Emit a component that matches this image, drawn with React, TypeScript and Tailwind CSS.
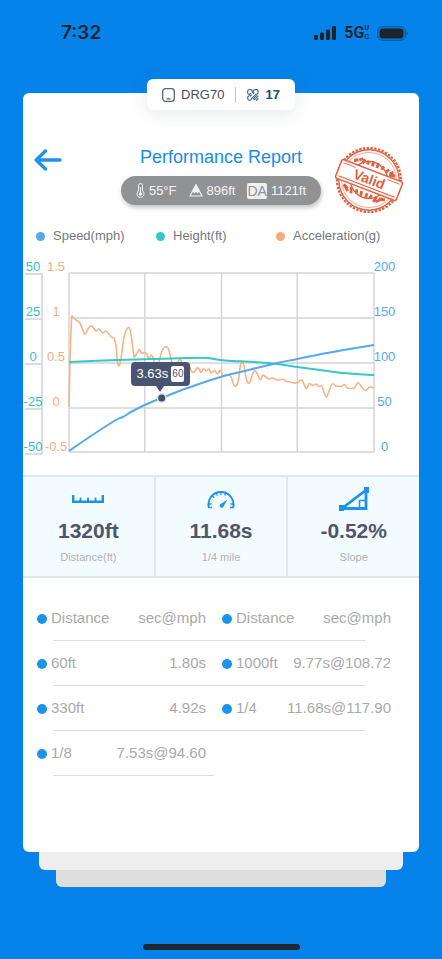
import React from "react";

type Point = [number, number];

const speed: Point[] = [
  [0, 178], [19, 165], [47, 147], [54, 144], [64, 138], [76, 132], [93, 125],
  [119, 115], [152, 104], [172, 99], [209, 90], [229, 86], [259, 80], [306, 72],
];

const height: Point[] = [
  [0, 89], [49, 87], [85, 86], [119, 85], [139, 85], [152, 87], [165, 88],
  [185, 89], [209, 91], [229, 94], [252, 97], [275, 100], [306, 102],
];

const acceleration: Point[] = [
  [0, 134], [1, 90], [2.5, 47], [4, 44.5], [7, 47], [11, 50], [15, 60], [17, 60],
  [20, 54.5], [23, 53], [27, 58], [30, 56], [34, 60], [37, 58], [40, 61],
  [42, 64], [45, 65], [47, 72], [49, 91], [51, 91], [53, 80], [55, 65],
  [57, 58], [60, 54.5], [62, 60], [65, 82], [66.5, 83], [69, 79], [70.5, 76.5],
  [73, 80], [75.5, 79.5], [78, 81], [80, 86], [82.5, 82], [84.5, 85], [86, 90],
  [90, 89], [92.5, 80], [95, 75], [98.5, 74], [101, 80], [103, 89], [105, 92],
  [109, 89], [111.5, 86.5], [113.5, 90], [117, 94], [120, 92], [123.5, 99],
  [126, 98.5], [128.5, 95], [130.5, 96], [132.5, 99.5], [135, 95.5],
  [137.5, 98], [140.5, 96], [142.5, 100], [146, 97.5], [149, 101], [152, 97],
  [154, 102], [157, 102.5], [161, 102], [163, 105], [165.5, 112.5],
  [168.5, 112], [170.5, 104], [172, 92], [173.5, 89.5], [175.5, 92],
  [177.5, 104], [179.5, 110], [182, 108], [184.5, 100], [187, 98],
  [189.5, 102], [192, 107], [194.5, 102], [197.5, 104], [200.5, 106],
  [204, 105], [210, 107], [214.5, 106], [217.5, 108], [223.5, 109.5],
  [229, 110], [233.5, 107], [238, 115.5], [241, 110.5], [244.5, 112.5],
  [248, 111], [250.5, 113.5], [253.5, 113], [256, 120], [258.5, 124],
  [260.5, 119], [264, 111], [268, 113], [274, 113], [276.5, 111.5],
  [279.5, 115], [286, 115], [290, 109.5], [293.5, 114], [297.5, 117.5],
  [301.5, 114], [306, 115],
];

// smooth line through all points
const toPath = (pts: Point[]) => {
  let d = `M${pts[0][0]} ${pts[0][1]}`;
  for (let i = 0; i < pts.length - 1; i++) {
    const a = pts[i - 1] || pts[i];
    const b = pts[i];
    const c = pts[i + 1];
    const e = pts[i + 2] || c;
    d += ` C${b[0] + (c[0] - a[0]) / 6} ${b[1] + (c[1] - a[1]) / 6} ${
      c[0] - (e[0] - b[0]) / 6
    } ${c[1] - (e[1] - b[1]) / 6} ${c[0]} ${c[1]}`;
  }
  return d;
};

const legend = [
  { label: "Speed(mph)", dot: "bg-[#56a9ee]" },
  { label: "Height(ft)", dot: "bg-[#35c8c9]" },
  { label: "Acceleration(g)", dot: "bg-[#f6ab7c]" },
];

const rows = [
  ["60ft", "1.80s", "1000ft", "9.77s@108.72"],
  ["330ft", "4.92s", "1/4", "11.68s@117.90"],
  ["1/8", "7.53s@94.60", "", ""],
];

const StatusBar = () => (
  <div className="flex h-[66px] items-center justify-between pl-[61px] pr-[34px] text-[#1c232b]">
    <span className="font-['Inter'] text-[19px] font-semibold">7:32</span>
    <div className="flex items-center gap-2">
      <svg width="22" height="14" viewBox="0 0 22 14" fill="currentColor">
        <rect x="0" y="9" width="4" height="5" rx="1.2" />
        <rect x="6" y="6.5" width="4" height="7.5" rx="1.2" />
        <rect x="12" y="3.5" width="4" height="10.5" rx="1.2" />
        <rect x="18" y="0" width="4" height="14" rx="1.2" />
      </svg>
      <div className="flex items-center font-['Roboto'] font-semibold">
        <span className="text-[16px] leading-4">5G</span>
        <span className="flex flex-col text-[7px] leading-[9px]">
          <span className="h-[9px]">U</span>
          <span className="h-[9px]">C</span>
        </span>
      </div>
      <svg width="31" height="15" viewBox="0 0 31 15" fill="none">
        <rect x="0.8" y="0.8" width="27.4" height="13.4" rx="4.5" stroke="#1c232b" strokeOpacity="0.55" />
        <rect x="2.5" y="2.5" width="24" height="10" rx="3" fill="#1c232b" />
        <path d="M29.5 5.3c1.500.7 1.500 3.700 0 4.400z" fill="#1c232b" fillOpacity="0.6" />
      </svg>
    </div>
  </div>
);

const Stamp = () => (
  <svg width="70" height="70" viewBox="0 0 70 70" fill="none" stroke="#e0603f">
    <circle cx="35" cy="35" r="32" strokeWidth="2.2" strokeDasharray="2.4 1.4" />
    <circle cx="35" cy="35" r="30.2" strokeWidth="1.4" />
    <circle cx="35" cy="35" r="27.5" strokeWidth="0.8" strokeOpacity="0.7" />
    <circle cx="35" cy="35" r="18.5" strokeWidth="1.3" />
    <g transform="rotate(21 35 35)">
      <path d="M19 20l3-3M23 22l1-5M28 21v-4M33 21v-5M38 21v-5M43 21l1-4M48 22l2-4M52 22l3-3" strokeWidth="2.8" />
      <path d="M15 49l4 4M21 48l2 6M27 48l1 4M32 48l1 5M38 48v5M43 48l-1 4M48 48l-1 6M53 49l-4 4" strokeWidth="2.8" />
      <path d="M14 22l4-2M52 23l6-1M13 48l5 3M51 49l6-1" strokeWidth="3.2" />
      <rect x="2.5" y="25" width="65" height="20" rx="2" fill="#fff" strokeWidth="1.5" />
      <path d="M5 42h60" strokeWidth="1.2" />
      <path d="M5 28h13M52 28h13" strokeWidth="0.8" />
      <text x="35" y="39" textAnchor="middle" fill="#e0603f" stroke="none" fontSize="14" fontWeight="700" fontFamily="'Liberation Sans', sans-serif">
        Valid
      </text>
    </g>
  </svg>
);

const Chart = () => (
  <div className="mt-[15px] flex pl-[2px] text-[13px] leading-3">
    <div className="w-[18px] text-[#35c0c9]">
      {["50", "25", "0", "-25", "-50"].map((v) => (
        <div key={v} className="group flex h-[45px] flex-col last:h-3.5">
          <span className="flex h-3 justify-center border-r-2 border-[#d9dddd] whitespace-nowrap group-first:border-transparent">
            {v}
          </span>
          <span className="flex-1 border-t-2 border-r-2 border-[#d9dddd]" />
        </div>
      ))}
    </div>
    <div className="w-[26px] text-[#f6ab7c]">
      {["1.5", "1", "0.5", "0", "-0.5"].map((v) => (
        <div key={v} className="flex h-[45px] justify-center whitespace-nowrap last:h-3">
          {v}
        </div>
      ))}
    </div>
    <div className="relative mt-3 h-[180px] flex-1">
      <svg
        className="block h-full w-full overflow-visible"
        viewBox="0 0 306 180"
        preserveAspectRatio="none"
        fill="none"
      >
        <path
          d="M0 0H306M0 45H306M0 90H306M0 135H306M0 179H306M0 0V179M76 0V179M153 0V179M229 0V179M306 0V179"
          stroke="#d3d6d6"
          strokeWidth="1.5"
        />
        <path d={toPath(acceleration)} stroke="#f7b288" strokeWidth="1.6" />
        <path d={toPath(height)} stroke="#35c8c9" strokeWidth="2" />
        <path d={toPath(speed)} stroke="#56a9ee" strokeWidth="2" />
        <circle cx="93" cy="125" r="5" fill="#d5e1ea" />
        <circle cx="93" cy="125" r="3.5" fill="#44506b" />
      </svg>
      <div className="absolute top-[89px] left-[30%] flex h-6 -translate-x-1/2 items-center gap-[3px] rounded bg-[#4a5470] px-1.5 text-white">
        3.63s
        <span className="rounded-xs bg-white px-px py-0.5 text-[10px] text-[#4a5470]">60</span>
        <span className="absolute top-full left-1/2 -translate-x-1/2 border-x-4 border-t-6 border-x-transparent border-t-[#4a5470]" />
      </div>
    </div>
    <div className="w-[45px] pr-6 text-[#56a9ee]">
      {["200", "150", "100", "50", "0"].map((v) => (
        <div key={v} className="flex h-[45px] justify-center last:h-3">
          {v}
        </div>
      ))}
    </div>
  </div>
);

const Stat = ({ icon, value, label }: { icon: React.ReactNode; value: string; label: string }) => (
  <div className="flex flex-1 flex-col items-center border-r-2 border-[#dce8ec] pt-2 last:border-r-0">
    <div className="flex h-7 items-center text-[#1e90ee]">{icon}</div>
    <span className="mt-1 text-[21px] leading-7 font-bold text-[#4e566c]">{value}</span>
    <span className="mt-1 text-[11px] leading-4 text-[#b2b2b2]">{label}</span>
  </div>
);

const Dotted = ({ children }: { children: React.ReactNode }) => (
  <span className="flex items-center gap-1 whitespace-nowrap">
    <span className="size-2.5 shrink-0 rounded-full bg-[#1a94ea]" />
    {children}
  </span>
);

export default function App() {
  return (
    <div className="flex min-h-screen flex-col bg-[#0583ea] font-['Liberation_Sans',sans-serif]">
      <StatusBar />
      <main className="mx-[23px] mt-[13px] flex flex-col">
        <div className="relative z-10 -mb-[17px] flex h-[31px] items-center self-center rounded-md bg-white px-[15px] shadow-[0_3px_18px_rgba(80,110,110,0.16)]">
          <svg width="13" height="14" viewBox="0 0 13 14" fill="none" stroke="#5b6377" strokeWidth="1.3">
            <rect x="0.7" y="0.7" width="11.6" height="12.6" rx="2.8" />
            <path d="M4.5 10.8h4" />
          </svg>
          <span className="ml-1.5 text-[13px] text-[#484d5a]">DRG70</span>
          <span className="mx-[11px] h-4 w-px bg-[#c3c5c9]" />
          <svg width="12" height="12" viewBox="0 0 12 12" fill="none" stroke="#4a6480" strokeWidth="1.1">
            <path d="M4.200 4.200L3 5.200A1.700 1.700 0 0 1 .8 3 1.700 1.700 0 0 1 3 .8a1.700 1.700 0 0 1 2.200 2.200L7 4.800M7.200 4.200L6.400 3A1.700 1.700 0 0 1 8.600.8 1.700 1.700 0 0 1 11 3a1.700 1.700 0 0 1-2 2.200L4.600 9.400a1.700 1.700 0 0 1-2.200 1.800A1.700 1.700 0 0 1 .8 9a1.700 1.700 0 0 1 2.400-2L5 5.600" />
            <path d="M5.800 10.200l4.400-4M7 11.200l4.200-4M9 11.500l2.400-2" />
          </svg>
          <span className="ml-1.5 text-[13px] font-bold text-[#234a70]">17</span>
        </div>

        <section className="rounded-md bg-white pt-[50px] pb-[76px]">
          <header className="flex h-[72px]">
            <div className="w-24 pt-1.5 pl-[11px]">
              <button aria-label="Back" className="block">
                <svg width="28" height="22" viewBox="0 0 28 22" fill="none" stroke="#1e90ee" strokeWidth="3.4" strokeLinecap="round" strokeLinejoin="round">
                  <path d="M11.500 2L2.200 11l9.300 9M2.200 11H26" />
                </svg>
              </button>
            </div>
            <div className="flex flex-1 flex-col items-center">
              <h1 className="text-[18px] leading-7 text-[#1a8ce6]">Performance Report</h1>
              <div className="mt-[5px] flex h-[29px] items-center gap-3 rounded-full bg-[#919294] px-[15px] text-[13px] whitespace-nowrap text-[#f5f5f5] shadow-[1px_3px_4px_rgba(0,0,0,0.22)]">
                <span className="flex items-center gap-1">
                  <svg width="9" height="15" viewBox="0 0 9 15" fill="none" stroke="#f0f0f0" strokeWidth="1">
                    <path d="M2.500 8V2.500a2 2 0 0 1 4 0V8a3.500 3.500 0 1 1-4 0z" />
                    <circle cx="4.500" cy="11" r="1.300" fill="#f0f0f0" />
                    <path d="M4.500 4v6" />
                  </svg>
                  55°F
                </span>
                <span className="flex items-center gap-1">
                  <svg width="14" height="13" viewBox="0 0 14 13" fill="none" stroke="#f0f0f0" strokeWidth="1.200">
                    <path d="M7 1L1 12h12z" />
                    <path d="M7 1L4 7l1.500 1.500L7 7l1.500 1.500L10 7z" fill="#f0f0f0" />
                  </svg>
                  896ft
                </span>
                <span className="flex items-center gap-1">
                  <span className="rounded-xs bg-[#f0f0f0] text-[14px] leading-4 text-[#919294]">DA</span>
                  1121ft
                </span>
              </div>
            </div>
            <div className="w-24 pt-0.5 pl-[11px]">
              <Stamp />
            </div>
          </header>

          <ul className="mt-[11px] flex pl-[13px] text-[13px] leading-5 text-[#75787e]">
            {legend.map((item) => (
              <li key={item.label} className="flex w-[120px] items-center gap-2 whitespace-nowrap">
                <span className={`size-[9px] rounded-full ${item.dot}`} />
                {item.label}
              </li>
            ))}
          </ul>

          <Chart />

          <div className="mt-5 flex h-[103px] border-y-2 border-[#dce8ec] bg-[#f2fbfd]">
            <Stat
              icon={
                <svg width="32" height="8" viewBox="0 0 32 8" fill="none" stroke="currentColor">
                  <path d="M1.200 0v6.800h29.600V0" strokeWidth="2.400" />
                  <path d="M8.500 2.500v4M16 2.500v4M23.500 2.500v4" strokeWidth="1.800" />
                </svg>
              }
              value="1320ft"
              label="Distance(ft)"
            />
            <Stat
              icon={
                <svg width="28" height="19" viewBox="0 0 28 19" fill="none" stroke="currentColor">
                  <path d="M2 18A12.500 12.500 0 1 1 26 18" strokeWidth="2" />
                  <path d="M1.500 14h3M26.500 14h-3M5.200 5.700l2 2M9.300 3l1 2.500M14 1.500V5M18.700 3l-1 2.500M2.500 17.500h2.500M25.500 17.500H23" strokeWidth="1.300" />
                  <path d="M20.500 9.500l-4.200 7.300a2 2 0 1 1-3.200-2.400z" fill="currentColor" stroke="none" />
                </svg>
              }
              value="11.68s"
              label="1/4 mile"
            />
            <Stat
              icon={
                <svg width="30" height="24" viewBox="0 0 30 24" fill="none" stroke="currentColor">
                  <path d="M3 21.500L27 3v18.500z" strokeWidth="2.800" />
                  <path d="M20.500 20v-6.500H26" strokeWidth="1.500" />
                  <path d="M0 18h5v6H0zM25 0h5v6h-5z" fill="currentColor" stroke="none" />
                </svg>
              }
              value="-0.52%"
              label="Slope"
            />
          </div>

          <table className="mx-3.5 mt-[18px] w-[calc(100%-42px)] table-fixed border-collapse text-[15px] text-[#a9a9a9]">
            <colgroup>
              <col className="w-16" />
              <col />
              <col className="w-20" />
              <col />
            </colgroup>
            <thead>
              <tr className="relative h-[45px]">
                <th
                  scope="col"
                  className="p-0 text-left font-normal after:absolute after:right-[26px] after:bottom-0 after:left-4 after:h-px after:bg-[#dedede]"
                >
                  <Dotted>Distance</Dotted>
                </th>
                <th scope="col" className="p-0 text-right font-normal">sec@mph</th>
                <th scope="col" className="py-0 pr-0 pl-4 text-left font-normal">
                  <Dotted>Distance</Dotted>
                </th>
                <th scope="col" className="p-0 text-right font-normal">sec@mph</th>
              </tr>
            </thead>
            <tbody>
              {rows.map(([d1, v1, d2, v2]) => (
                <tr key={d1} className="group relative h-[45px]">
                  <td className="p-0 after:absolute after:right-[26px] after:bottom-0 after:left-4 after:h-px after:bg-[#dedede] group-last:after:right-auto group-last:after:w-[161px]">
                    <Dotted>{d1}</Dotted>
                  </td>
                  <td className="p-0 text-right whitespace-nowrap">{v1}</td>
                  <td className="py-0 pr-0 pl-4">{d2 && <Dotted>{d2}</Dotted>}</td>
                  <td className="p-0 text-right whitespace-nowrap">{v2}</td>
                </tr>
              ))}
            </tbody>
          </table>
        </section>
        <div className="mx-4 h-[18px] rounded-b-md bg-[#eeeeee]" />
        <div className="mx-[33px] h-[17px] rounded-b-md bg-[#dedede]" />
      </main>
      <div className="mt-auto mb-[9px] h-1.5 w-[157px] self-center rounded-full bg-[#20262d]" />
    </div>
  );
}
